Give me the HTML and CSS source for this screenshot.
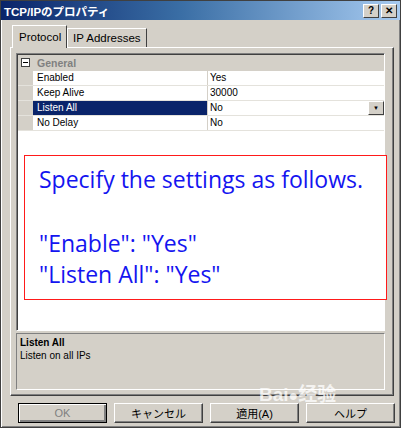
FILE: index.html
```html
<!DOCTYPE html>
<html lang="ja">
<head>
    <meta charset="UTF-8">
    <title>TCP/IPのプロパティ</title>
    <link rel="stylesheet" href="styles.css">
</head>
<body>

<div class="window">
    <div class="titlebar">
        <span class="title">TCP/IPのプロパティ</span>
        <div class="title-buttons">
            <span class="tbtn">?</span>
            <span class="tbtn">✕</span>
        </div>
    </div>

    <div class="tabs">
        <div class="tab active">Protocol</div>
        <div class="tab">IP Addresses</div>
    </div>

    <div class="panel">
        <!-- property grid -->
        <div class="grid">
            <div class="row group">
                <div class="margin"><span class="toggle"></span></div>
                <div class="group-name">General</div>
            </div>
            <div class="row">
                <div class="margin"></div>
                <div class="name">Enabled</div>
                <div class="value">Yes</div>
            </div>
            <div class="row">
                <div class="margin"></div>
                <div class="name">Keep Alive</div>
                <div class="value">30000</div>
            </div>
            <div class="row selected">
                <div class="margin"></div>
                <div class="name">Listen All</div>
                <div class="value">No<span class="drop">▼</span></div>
            </div>
            <div class="row">
                <div class="margin"></div>
                <div class="name">No Delay</div>
                <div class="value">No</div>
            </div>
        </div>

        <div class="desc">
            <div class="desc-title">Listen All</div>
            <div class="desc-text">Listen on all IPs</div>
        </div>
    </div>

    <div class="buttons">
        <button class="btn default">OK</button>
        <button class="btn">キャンセル</button>
        <button class="btn">適用(A)</button>
        <button class="btn">ヘルプ</button>
    </div>

    <!-- annotation over the dialog -->
    <div class="note">
        <p>Specify the settings as follows.</p>
        <p class="gap">"Enable": "Yes"</p>
        <p>"Listen All": "Yes"</p>
    </div>

    <div class="watermark">Bai<span class="paw">●</span>经验</div>
</div>

</body>
</html>
```

FILE: styles.css
```css
body {
    margin: 0;
    background: #d4d0c8;
    font-family: "Liberation Sans", "Noto Sans CJK JP", sans-serif;
}
.window {
    position: relative;
    width: 401px;
    height: 428px;
    box-sizing: border-box;
    background: #d4d0c8;
    border-left: 1px solid #404040;
    border-right: 1px solid #404040;
    border-bottom: 1px solid #404040;
    box-shadow: inset 1px 0 #ffffff, inset -1px -1px #808080;
    overflow: hidden;
}
.titlebar {
    height: 20px;
    background: linear-gradient(to right, #0a246a, #3a6ea5 45%, #a6caf0);
    border-top: 1px solid #404040;
    box-sizing: border-box;
    display: flex;
    align-items: center;
    justify-content: space-between;
    padding: 0 3px 0 3px;
}
.title {
    color: #ffffff;
    font-weight: bold;
    font-size: 11.5px;
    font-family: "Liberation Sans", "Noto Sans CJK JP", sans-serif;
}
.title-buttons {
    display: flex;
    gap: 2px;
}
.tbtn {
    width: 16px;
    height: 14px;
    box-sizing: border-box;
    background: #d4d0c8;
    border-top: 1px solid #ffffff;
    border-left: 1px solid #ffffff;
    border-right: 1px solid #404040;
    border-bottom: 1px solid #404040;
    font-size: 10px;
    font-weight: bold;
    line-height: 12px;
    text-align: center;
    color: #000;
}
.tabs {
    display: flex;
    align-items: flex-end;
    height: 22px;
    margin-top: 5px;
    padding-left: 11px;
    position: relative;
    z-index: 1;
}
.tab {
    height: 19px;
    box-sizing: border-box;
    padding: 0 5px;
    font-size: 11.5px;
    line-height: 18px;
    color: #000;
    border-top: 1px solid #ffffff;
    border-left: 1px solid #ffffff;
    border-right: 1px solid #404040;
    background: #d4d0c8;
}
.tab.active {
    height: 23px;
    margin-bottom: -1px;
    width: 55px;
    line-height: 22px;
    padding: 0 6px;
}
.tab + .tab {
    width: 80px;
}
.panel {
    margin: 0 6px 0 9px;
    height: 349px;
    box-sizing: border-box;
    border-top: 1px solid #ffffff;
    border-left: 1px solid #ffffff;
    border-right: 1px solid #404040;
    border-bottom: 1px solid #404040;
    box-shadow: inset -1px -1px #808080;
    padding: 5px 8px 0 5px;
}
.grid {
    height: 278px;
    box-sizing: border-box;
    background: #ffffff;
    border-top: 1px solid #808080;
    border-left: 1px solid #808080;
    border-right: 1px solid #ffffff;
    border-bottom: 1px solid #ffffff;
    box-shadow: inset 1px 1px #404040;
    padding: 1px 0 0 1px;
    font-size: 10px;
}
.row {
    display: flex;
    height: 15px;
    border-bottom: 1px solid #e4e2dc;
    box-sizing: border-box;
    line-height: 14px;
}
.row.group {
    height: 16px;
    background: #d4d0c8;
    border-bottom: none;
}
.margin {
    width: 15px;
    flex: none;
    background: #d4d0c8;
    position: relative;
}
.toggle {
    position: absolute;
    left: 3px;
    top: 3px;
    width: 9px;
    height: 9px;
    box-sizing: border-box;
    border: 1px solid #404040;
    background: #ffffff;
}
.toggle::after {
    content: "";
    position: absolute;
    left: 1px;
    top: 3px;
    width: 5px;
    height: 1px;
    background: #000;
}
.group-name {
    padding-left: 4px;
    font-weight: bold;
    color: #808080;
    font-size: 10.5px;
    line-height: 16px;
}
.name {
    width: 175px;
    flex: none;
    padding-left: 4px;
    box-sizing: border-box;
    border-right: 1px solid #d4d0c8;
    color: #000;
}
.value {
    flex: 1;
    padding-left: 2px;
    position: relative;
    color: #000;
}
.selected .name {
    background: #0a246a;
    color: #ffffff;
}
.drop {
    position: absolute;
    right: 0;
    top: 0;
    width: 16px;
    height: 14px;
    box-sizing: border-box;
    background: #d4d0c8;
    border-top: 1px solid #ffffff;
    border-left: 1px solid #ffffff;
    border-right: 1px solid #404040;
    border-bottom: 1px solid #404040;
    font-size: 6px;
    line-height: 12px;
    text-align: center;
}
.desc {
    margin-top: 2px;
    height: 57px;
    box-sizing: border-box;
    border-top: 1px solid #808080;
    border-left: 1px solid #808080;
    border-right: 1px solid #ffffff;
    border-bottom: 1px solid #ffffff;
    padding: 2px 3px;
    font-size: 10px;
    color: #000;
}
.desc-title {
    font-weight: bold;
    line-height: 13px;
}
.desc-text {
    line-height: 14px;
}
.buttons {
    display: flex;
    gap: 7px;
    padding: 7px 0 0 17px;
}
.btn {
    width: 89px;
    height: 20px;
    box-sizing: border-box;
    background: #d4d0c8;
    border-top: 1px solid #ffffff;
    border-left: 1px solid #ffffff;
    border-right: 1px solid #404040;
    border-bottom: 1px solid #404040;
    box-shadow: inset -1px -1px #808080;
    font-family: "Liberation Sans", "Noto Sans CJK JP", sans-serif;
    font-size: 11px;
    color: #000;
    padding: 0;
}
.btn.default {
    border: 1px solid #000;
    box-shadow: inset 1px 1px #ffffff, inset -2px -2px #808080;
    color: #808080;
}
.note {
    position: absolute;
    left: 23px;
    top: 155px;
    width: 363px;
    height: 145px;
    box-sizing: border-box;
    background: #ffffff;
    border: 1px solid #ff1a1a;
    padding: 8px 0 0 14px;
    font-family: "Open Sans", sans-serif;
    font-size: 23px;
    line-height: 31px;
    color: #1414f0;
}
.note p {
    margin: 0;
}
.note .gap {
    margin-top: 33px;
}
.watermark {
    position: absolute;
    left: 258px;
    top: 385px;
    color: rgba(255, 255, 255, 0.75);
    font-size: 19px;
    font-weight: bold;
    line-height: 20px;
    pointer-events: none;
}
.paw {
    font-size: 16px;
}
```
